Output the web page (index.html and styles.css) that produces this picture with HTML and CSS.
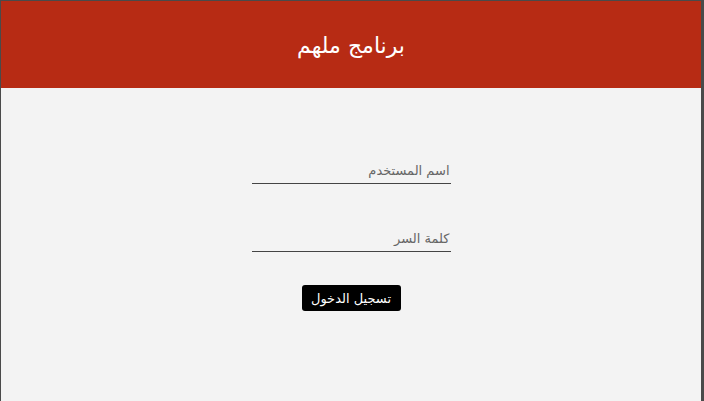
FILE: index.html
```html
<!DOCTYPE html>
<html lang="ar" dir="rtl">
<head>
<meta charset="utf-8">
<link rel="stylesheet" href="styles.css">
</head>
<body>
<div class="frame">
  <header class="top">
    <h1 class="title">برنامج ملهم</h1>
  </header>
  <main class="content">
    <form class="login">
      <input class="field" type="text" placeholder="اسم المستخدم">
      <input class="field" type="password" placeholder="كلمة السر">
      <button class="btn" type="button">تسجيل الدخول</button>
    </form>
  </main>
</div>
</body>
</html>
```
FILE: styles.css
```css
html, body {
  margin: 0;
  padding: 0;
  height: 100%;
  background: #4a4a4a;
}
body {
  font-family: "DejaVu Sans", sans-serif;
}
.frame {
  box-sizing: border-box;
  height: 100%;
  border-top: 1px solid #4a4a4a;
  border-left: 1px solid #4a4a4a;
  border-right: 3px solid #4a4a4a;
  background: #f3f3f3;
  display: flex;
  flex-direction: column;
}
.top {
  background: #b72b14;
  height: 87px;
  flex-shrink: 0;
  display: flex;
  align-items: center;
  justify-content: center;
}
.title {
  margin: 0;
  color: #ffffff;
  font-size: 22px;
  font-weight: normal;
  padding-top: 2px;
}
.content {
  flex: 1;
  display: flex;
  justify-content: center;
}
.login {
  display: flex;
  flex-direction: column;
  align-items: center;
  padding-top: 69px;
}
.field {
  width: 199px;
  height: 27px;
  margin: 0 0 41px 0;
  box-sizing: border-box;
  border: none;
  border-bottom: 1px solid #444;
  background: transparent;
  font-family: "DejaVu Sans", sans-serif;
  font-size: 13px;
  padding: 0 1px 0 0;
  outline: none;
  direction: rtl;
  text-align: right;
}
.field::placeholder {
  color: #666;
}
.login .field:nth-of-type(2) {
  margin-bottom: 33px;
}
.btn {
  background: #000;
  color: #fff;
  border: none;
  border-radius: 3px;
  font-family: "DejaVu Sans", sans-serif;
  font-size: 13px;
  width: 99px;
  height: 26px;
  padding: 0;
  margin: 0;
}
```
